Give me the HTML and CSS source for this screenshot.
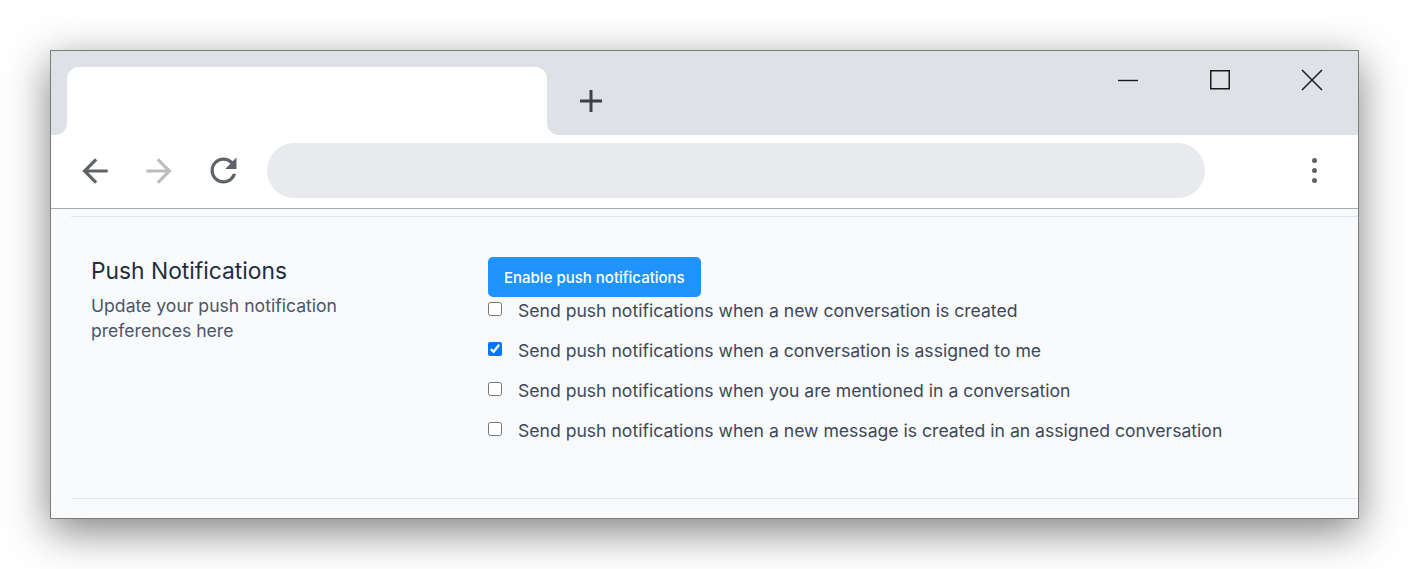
FILE: index.html
```html
<!DOCTYPE html>
<html lang="en">
<head>
<meta charset="utf-8">
<title>Push Notifications</title>
<link rel="stylesheet" href="styles.css">
</head>
<body>
<div class="window">
  <div class="tabstrip">
    <div class="tab"></div>
    <button class="newtab" aria-label="New tab">
      <svg width="24" height="24" viewBox="0 0 24 24"><path d="M12 1v22M1 12h22" stroke="#3c4043" stroke-width="3" fill="none"/></svg>
    </button>
    <div class="caption">
      <button class="cap-btn" aria-label="Minimize">
        <svg width="20" height="20" viewBox="0 0 20 20"><path d="M0 10.5h20" stroke="#1a1a1a" stroke-width="1.4" fill="none"/></svg>
      </button>
      <button class="cap-btn" aria-label="Maximize">
        <svg width="20" height="20" viewBox="0 0 20 20"><rect x="0.75" y="0.75" width="18.5" height="18" stroke="#1a1a1a" stroke-width="1.5" fill="none"/></svg>
      </button>
      <button class="cap-btn" aria-label="Close">
        <svg width="22" height="22" viewBox="0 0 22 22"><path d="M1 1l20 20M21 1L1 21" stroke="#1a1a1a" stroke-width="1.5" fill="none"/></svg>
      </button>
    </div>
  </div>
  <div class="toolbar">
    <button class="nav-btn" aria-label="Back">
      <svg width="38" height="38" viewBox="0 0 24 24"><path d="M20 11H7.83l5.59-5.59L12 4l-8 8 8 8 1.41-1.41L7.83 13H20v-2z" fill="#5f6368"/></svg>
    </button>
    <button class="nav-btn" aria-label="Forward">
      <svg width="38" height="38" viewBox="0 0 24 24"><path d="M4 11h12.17l-5.59-5.59L12 4l8 8-8 8-1.41-1.41L16.17 13H4v-2z" fill="#bdbdbd"/></svg>
    </button>
    <button class="nav-btn" aria-label="Reload">
      <svg width="39" height="39" viewBox="0 0 24 24"><path d="M17.65 6.35C16.2 4.9 14.21 4 12 4c-4.42 0-7.99 3.58-7.99 8s3.57 8 7.99 8c3.73 0 6.84-2.55 7.73-6h-2.08c-.82 2.33-3.04 4-5.65 4-3.31 0-6-2.69-6-6s2.69-6 6-6c1.66 0 3.14.69 4.22 1.78L13 11h7V4l-2.35 2.35z" fill="#5f6368"/></svg>
    </button>
    <div class="omnibox"></div>
    <button class="menu-btn" aria-label="Menu">
      <span class="dot"></span><span class="dot"></span><span class="dot"></span>
    </button>
  </div>
  <div class="content">
    <section class="settings-section">
      <div class="section-info">
        <h2 class="section-title">Push Notifications</h2>
        <p class="section-desc">Update your push notification preferences here</p>
      </div>
      <div class="section-body">
        <button class="btn-primary">Enable push notifications</button>
        <div class="check-list">
          <label class="check-row"><input type="checkbox"><span>Send push notifications when a new conversation is created</span></label>
          <label class="check-row"><input type="checkbox" checked><span>Send push notifications when a conversation is assigned to me</span></label>
          <label class="check-row"><input type="checkbox"><span>Send push notifications when you are mentioned in a conversation</span></label>
          <label class="check-row"><input type="checkbox"><span>Send push notifications when a new message is created in an assigned conversation</span></label>
        </div>
      </div>
    </section>
  </div>
</div>
</body>
</html>
```

FILE: styles.css
```css
* { box-sizing: border-box; }

html, body {
  margin: 0;
  padding: 0;
  background: #ffffff;
}

body {
  font-family: Inter, "Noto Sans", sans-serif;
  padding: 50px 0 0 50px;
  min-height: 569px;
}

button {
  font-family: inherit;
  border: 0;
  background: none;
  padding: 0;
  margin: 0;
  cursor: pointer;
}

.window {
  width: 1309px;
  height: 469px;
  border: 1px solid #7b7b7b;
  display: flex;
  flex-direction: column;
  background: #ffffff;
  box-shadow: 0 12px 40px rgba(0, 0, 0, 0.5);
}

/* Tab strip */
.tabstrip {
  height: 84px;
  background: #dee1e6;
  display: flex;
  align-items: flex-start;
  flex-shrink: 0;
}

.tab {
  position: relative;
  margin-left: 16px;
  margin-top: 16px;
  width: 480px;
  height: 68px;
  background: #ffffff;
  border-radius: 12px 12px 0 0;
}

.tab::before,
.tab::after {
  content: "";
  position: absolute;
  bottom: 0;
  width: 12px;
  height: 12px;
}

.tab::before {
  left: -12px;
  background: radial-gradient(circle at 0 0, transparent 11.5px, #ffffff 12.5px);
}

.tab::after {
  right: -12px;
  background: radial-gradient(circle at 100% 0, transparent 11.5px, #ffffff 12.5px);
}

.newtab {
  width: 40px;
  height: 34px;
  margin-top: 33px;
  margin-left: 24px;
  display: flex;
  align-items: center;
  justify-content: center;
}

.caption {
  margin-left: auto;
  display: flex;
}

.cap-btn {
  width: 92px;
  height: 58px;
  display: flex;
  align-items: center;
  justify-content: center;
}

/* Toolbar */
.toolbar {
  height: 74px;
  background: #ffffff;
  border-bottom: 1px solid #a9a9a9;
  display: flex;
  align-items: flex-start;
  padding-top: 8px;
  padding-left: 12px;
  flex-shrink: 0;
}

.nav-btn {
  width: 64px;
  height: 55px;
  display: flex;
  align-items: center;
  justify-content: center;
}

.omnibox {
  margin-left: 12px;
  width: 938px;
  height: 55px;
  border-radius: 28px;
  background: #e8eaed;
}

.menu-btn {
  margin-left: auto;
  margin-right: 22px;
  width: 44px;
  height: 55px;
  display: flex;
  flex-direction: column;
  align-items: center;
  justify-content: center;
  gap: 5px;
}

.dot {
  width: 5px;
  height: 5px;
  border-radius: 50%;
  background: #5f6368;
}

/* Content */
.content {
  flex: 1;
  background: #f9fafc;
  padding: 7px 0 0 20px;
}

.settings-section {
  display: flex;
  border-top: 1px solid #e0e6ed;
  border-bottom: 1px solid #e4e4ee;
  padding: 40px 0 55px 20px;
}

.section-info {
  width: 397px;
  flex-shrink: 0;
}

.section-title {
  margin: 0;
  font-size: 22.8px;
  line-height: 28px;
  font-weight: 400;
  color: #1f2d3d;
}

.section-desc {
  margin: 8px 0 0;
  font-size: 17.6px;
  line-height: 25px;
  color: #4a5568;
  width: 280px;
}

.section-body {
  display: flex;
  flex-direction: column;
  align-items: flex-start;
}

.btn-primary {
  height: 40px;
  padding: 0 16px;
  border-radius: 5px;
  background: #1f93ff;
  color: #ffffff;
  font-size: 15px;
  font-weight: 500;
}

.check-list {
  margin-top: 2px;
  display: flex;
  flex-direction: column;
  gap: 16px;
}

.check-row {
  display: flex;
  align-items: flex-start;
  gap: 16px;
  font-size: 17.6px;
  line-height: 24px;
  color: #3c4858;
}

.check-row input {
  margin: 3px 0 0;
  width: 14px;
  height: 14px;
}
```
